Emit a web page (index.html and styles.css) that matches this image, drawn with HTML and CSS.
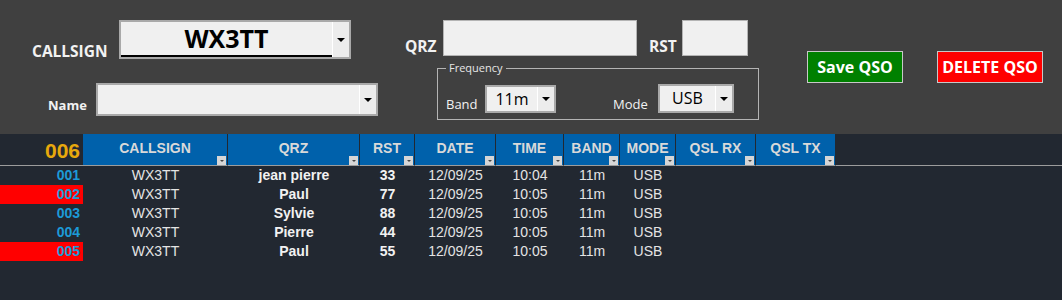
FILE: index.html
```html
<!DOCTYPE html>
<html lang="en">

<head>
  <meta charset="UTF-8">
  <meta name="viewport" content="width=device-width, initial-scale=1.0">
  <title>QSO Log</title>
  <link rel="stylesheet" href="styles.css">
</head>

<body>
  <div class="panel">
    <div class="group-left">
      <div class="field-row call-row">
        <label class="lbl lbl-big">CALLSIGN</label>
        <div class="combo combo-call">
          <span class="combo-value">WX3TT</span>
          <span class="combo-btn"></span>
        </div>
      </div>
      <div class="field-row name-row">
        <label class="lbl lbl-small">Name</label>
        <div class="combo combo-name">
          <span class="combo-value"></span>
          <span class="combo-btn"></span>
        </div>
      </div>
    </div>

    <div class="group-mid">
      <div class="field-row">
        <label class="lbl lbl-big lbl-qrz">QRZ</label>
        <div class="text-box box-qrz"></div>
        <label class="lbl lbl-big lbl-rst">RST</label>
        <div class="text-box box-rst"></div>
      </div>
      <fieldset class="freq">
        <legend>Frequency</legend>
        <div class="freq-row">
          <label class="freq-lbl lbl-band">Band</label>
          <div class="combo combo-band">
            <span class="combo-value">11m</span>
            <span class="combo-btn"></span>
          </div>
          <label class="freq-lbl lbl-mode">Mode</label>
          <div class="combo combo-mode">
            <span class="combo-value">USB</span>
            <span class="combo-btn"></span>
          </div>
        </div>
      </fieldset>
    </div>

    <div class="group-btns">
      <button class="btn btn-save">Save QSO</button>
      <button class="btn btn-delete">DELETE QSO</button>
    </div>
  </div>

  <table class="log">
    <colgroup>
      <col style="width:83px">
      <col style="width:145px">
      <col style="width:132px">
      <col style="width:55px">
      <col style="width:81px">
      <col style="width:68px">
      <col style="width:56px">
      <col style="width:56px">
      <col style="width:80px">
      <col style="width:80px">
      <col>
    </colgroup>
    <thead>
      <tr>
        <th class="count">006</th>
        <th class="head">CALLSIGN<span class="filter"></span></th>
        <th class="head">QRZ<span class="filter"></span></th>
        <th class="head">RST<span class="filter"></span></th>
        <th class="head">DATE<span class="filter"></span></th>
        <th class="head">TIME<span class="filter"></span></th>
        <th class="head">BAND<span class="filter"></span></th>
        <th class="head">MODE<span class="filter"></span></th>
        <th class="head">QSL RX<span class="filter"></span></th>
        <th class="head">QSL TX<span class="filter"></span></th>
        <th></th>
      </tr>
    </thead>
    <tbody>
      <tr>
        <td class="num">001</td><td>WX3TT</td><td class="bold">jean pierre</td><td class="bold">33</td>
        <td>12/09/25</td><td>10:04</td><td>11m</td><td>USB</td><td></td><td></td><td></td>
      </tr>
      <tr>
        <td class="num flagged">002</td><td>WX3TT</td><td class="bold">Paul</td><td class="bold">77</td>
        <td>12/09/25</td><td>10:05</td><td>11m</td><td>USB</td><td></td><td></td><td></td>
      </tr>
      <tr>
        <td class="num">003</td><td>WX3TT</td><td class="bold">Sylvie</td><td class="bold">88</td>
        <td>12/09/25</td><td>10:05</td><td>11m</td><td>USB</td><td></td><td></td><td></td>
      </tr>
      <tr>
        <td class="num">004</td><td>WX3TT</td><td class="bold">Pierre</td><td class="bold">44</td>
        <td>12/09/25</td><td>10:05</td><td>11m</td><td>USB</td><td></td><td></td><td></td>
      </tr>
      <tr>
        <td class="num flagged">005</td><td>WX3TT</td><td class="bold">Paul</td><td class="bold">55</td>
        <td>12/09/25</td><td>10:05</td><td>11m</td><td>USB</td><td></td><td></td><td></td>
      </tr>
    </tbody>
  </table>
</body>

</html>
```

FILE: styles.css
```css
body {
  margin: 0;
  background-color: #222831;
  font-family: "Liberation Sans", Arial, sans-serif;
}

/* form panel */
.panel {
  display: flex;
  height: 134px;
  box-sizing: border-box;
  padding-top: 20px;
  background-color: #404040;
  font-family: "Open Sans", sans-serif;
  color: #f2f2f2;
}

.group-left {
  width: 378px;
}

.field-row {
  display: flex;
  align-items: flex-end;
}

.lbl {
  font-weight: bold;
  line-height: 1;
}

.lbl-big {
  font-size: 15.5px;
}

.lbl-small {
  font-size: 13px;
  margin-bottom: 4px;
}

.call-row .lbl {
  width: 87px;
  padding-left: 32px;
}

.name-row {
  margin-top: 24px;
  padding-left: 48px;
}

.name-row .lbl {
  width: 48px;
}

.combo {
  display: flex;
  box-sizing: border-box;
  border: 2px solid #a9a9a9;
  background-color: #f0f0f0;
  color: #000;
}

.combo-value {
  flex: 1;
  text-align: center;
}

.combo-btn {
  display: flex;
  align-items: center;
  justify-content: center;
  width: 16px;
  border-left: 1px solid #ffffff;
  background-color: #ececec;
}

.combo-btn::after {
  content: "";
  border-left: 4px solid transparent;
  border-right: 4px solid transparent;
  border-top: 4px solid #000;
}

.combo-call {
  width: 232px;
  height: 39px;
}

.combo-call .combo-value {
  font-size: 25px;
  font-weight: bold;
  line-height: 33px;
  border-bottom: 2px solid #000;
}

.combo-name {
  width: 282px;
  height: 33px;
}

/* QRZ / RST */
.group-mid {
  margin-left: 27px;
}

.lbl-qrz {
  width: 38px;
  margin-bottom: 2px;
}

.lbl-rst {
  width: 33px;
  margin-left: 12px;
  margin-bottom: 2px;
}

.text-box {
  box-sizing: border-box;
  height: 36px;
  border: 1px solid #b4b4b4;
  background-color: #f0f0f0;
}

.box-qrz {
  width: 194px;
}

.box-rst {
  width: 66px;
}

.freq {
  box-sizing: border-box;
  width: 322px;
  margin: 6px 0 0 32px;
  padding: 10px 6px 6px 8px;
  border: 1px solid #b4b4b4;
}

.freq legend {
  font-size: 11px;
  line-height: 12px;
  padding: 0 3px;
  color: #e6e6e6;
}

.freq-row {
  display: flex;
  align-items: flex-end;
}

.freq-lbl {
  font-size: 13px;
  line-height: 1;
  margin-bottom: 2px;
}

.lbl-band {
  width: 39px;
}

.lbl-mode {
  width: 45px;
  margin-left: 57px;
}

.combo-band,
.combo-mode {
  font-size: 16px;
  line-height: 24px;
}

.combo-band {
  width: 71px;
  height: 28px;
}

.combo-mode {
  width: 76px;
  height: 29px;
}

/* buttons */
.group-btns {
  display: flex;
  align-items: flex-start;
  margin-left: 48px;
  padding-top: 31px;
}

.btn {
  height: 32px;
  padding: 0;
  border: 1px solid #c8c8c8;
  font-family: "Open Sans", sans-serif;
  font-size: 16px;
  font-weight: bold;
  color: #ffffff;
  cursor: pointer;
}

.btn-save {
  width: 96px;
  background-color: #008000;
}

.btn-delete {
  width: 106px;
  margin-left: 34px;
  background-color: #ff0000;
}

/* log table */
.log {
  width: 100%;
  table-layout: fixed;
  border-collapse: separate;
  border-spacing: 0;
}

.log th {
  position: relative;
  height: 32px;
  padding: 6px 0 0;
  vertical-align: top;
  border-bottom: 1px solid #9c9c9c;
  box-sizing: border-box;
  font-size: 14px;
  line-height: 16px;
}

.log th.head {
  border-right: 1px solid #222831;
  background-color: #0061ab;
  color: #d9d9d9;
}

.log th.count {
  padding: 5px 3px 0 0;
  text-align: right;
  font-size: 21px;
  line-height: 24px;
  color: #e8a80c;
}

.filter {
  position: absolute;
  right: 1px;
  bottom: 0;
  width: 9px;
  height: 9px;
  background-color: #d6d6d6;
}

.filter::after {
  content: "";
  position: absolute;
  left: 3px;
  top: 4px;
  border-left: 2px solid transparent;
  border-right: 2px solid transparent;
  border-top: 2px solid #444;
}

.log td {
  height: 19px;
  padding: 0;
  text-align: center;
  font-size: 14px;
  line-height: 19px;
  color: #e4e4e4;
  white-space: nowrap;
}

.log td.bold {
  font-weight: bold;
  color: #f2f2f2;
}

.log td.num {
  padding-right: 3px;
  text-align: right;
  font-weight: bold;
  color: #1c9ad8;
}

.log td.flagged {
  background-color: #ff0000;
}
```
